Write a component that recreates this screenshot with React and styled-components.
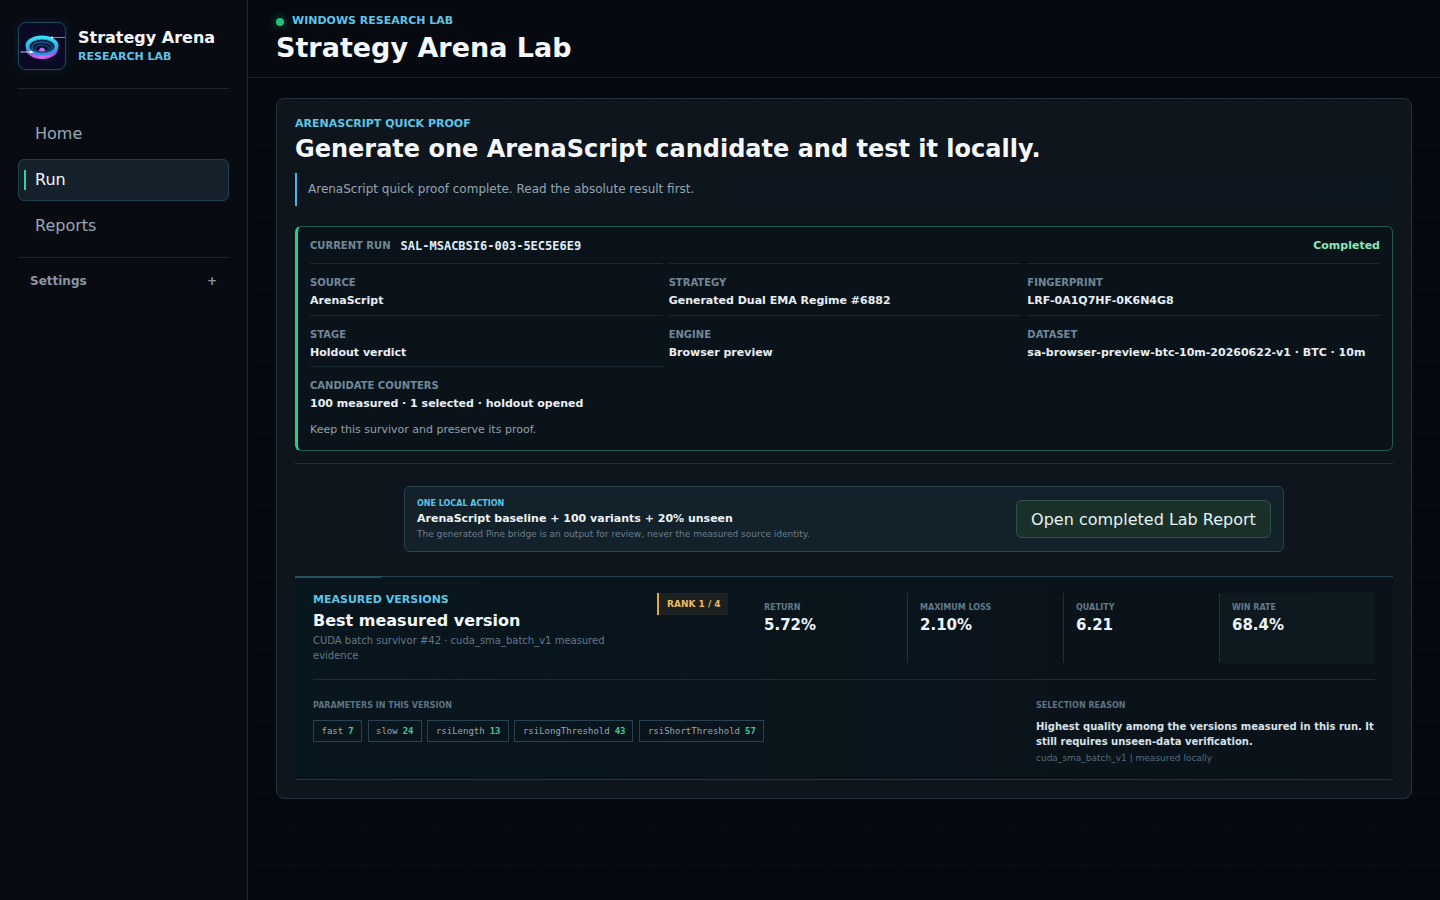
import React from 'react';
import styled, { createGlobalStyle } from 'styled-components';

const GlobalStyle = createGlobalStyle`
  html, body { margin: 0; padding: 0; height: 100%; }
  body {
    background-color: #05080e;
    background-image:
      linear-gradient(rgba(120, 160, 180, 0.025) 1px, transparent 1px),
      linear-gradient(90deg, rgba(120, 160, 180, 0.025) 1px, transparent 1px);
    background-size: 36px 36px;
    font-family: "DejaVu Sans", sans-serif;
    color: #f3f7fa;
    overflow: hidden;
  }
  * { box-sizing: border-box; }
`;

const Shell = styled.div`
  display: grid;
  grid-template-columns: 248px 1fr;
  height: 900px;
`;

const Sidebar = styled.aside`
  background: #080b12;
  border-right: 1px solid #222c36;
  padding: 22px 18px 0;
`;

const Brand = styled.div`
  display: flex;
  align-items: center;
  gap: 12px;
  height: 67px;
  padding-bottom: 19px;
  border-bottom: 1px solid #17252f;
`;

const LogoBox = styled.div`
  width: 48px;
  height: 48px;
  border: 1px solid #1d4a5c;
  border-radius: 8px;
  background: #0a0a24;
  overflow: hidden;
  box-shadow: 0 0 12px rgba(60, 180, 220, 0.12);
`;

const BrandName = styled.div`
  margin-top: 2px;
  font-size: 16px;
  font-weight: 700;
  line-height: 20px;
  color: #f5f8fb;
`;

const BrandSub = styled.div`
  margin-top: 1px;
  font-size: 11px;
  font-weight: 700;
  line-height: 16px;
  color: #5cc5e6;
`;

const Nav = styled.nav`
  display: flex;
  flex-direction: column;
  gap: 4px;
  padding: 24px 0 10px;
  border-bottom: 1px solid #1b232c;
`;

const NavItem = styled.a`
  position: relative;
  display: flex;
  align-items: center;
  height: 42px;
  padding: 0 0 2px 16px;
  font-size: 16px;
  border-radius: 6px;
  border: 1px solid ${(p) => (p.$active ? '#21404f' : 'transparent')};
  background: ${(p) => (p.$active ? '#15212a' : 'transparent')};
  color: ${(p) => (p.$active ? '#f3f7fa' : '#99a6b3')};

  &::before {
    content: ${(p) => (p.$active ? '""' : 'none')};
    position: absolute;
    left: 5px;
    top: 10px;
    bottom: 10px;
    width: 2px;
    background: #2dd4a8;
  }
`;

const SettingsRow = styled.div`
  display: flex;
  justify-content: space-between;
  align-items: center;
  padding: 16px 12px 0;
  font-size: 12px;
  font-weight: 700;
  color: #8a96a2;
`;

const Main = styled.main`
  min-width: 0;
`;

const Header = styled.header`
  height: 78px;
  padding: 13px 28px 0;
  background: #060a10;
  border-bottom: 1px solid #18222b;
`;

const Eyebrow = styled.div`
  display: flex;
  align-items: center;
  gap: 8px;
  font-size: 11px;
  font-weight: 700;
  line-height: 16px;
  color: #5cc5e6;
`;

const StatusDot = styled.span`
  width: 8px;
  height: 8px;
  margin-top: 1px;
  border-radius: 50%;
  background: #22c07a;
  box-shadow: 0 0 8px rgba(34, 192, 122, 0.55);
`;

const PageTitle = styled.h1`
  margin: 2px 0 0;
  font-size: 27px;
  font-weight: 700;
  line-height: 34px;
  color: #f5f8fb;
`;

const Content = styled.div`
  padding: 20px 28px;
`;

const Card = styled.section`
  height: 701px;
  padding: 18px;
  border: 1px solid #24323d;
  border-radius: 8px;
  background: #0e151d;
`;

const SectionLabel = styled.div`
  font-size: 11px;
  font-weight: 700;
  line-height: 14px;
  color: #5cc5e6;
`;

const CardTitle = styled.h2`
  margin: 2px 0 0;
  font-size: 24px;
  font-weight: 700;
  line-height: 32px;
  color: #f5f8fb;
`;

const Notice = styled.p`
  margin: 8px 0 0;
  height: 33px;
  padding: 0 0 2px 11px;
  display: flex;
  align-items: center;
  border-left: 2px solid #48b8e8;
  font-size: 12px;
  color: #94a5b2;
  background: linear-gradient(90deg, #0e151d, #0d171f);
`;

const RunPanel = styled.div`
  margin-top: 20px;
  height: 225px;
  padding: 0 12px 0 12px;
  border: 1px solid #235a48;
  border-left: 3px solid #25cf8a;
  border-radius: 6px;
  background: #0a131a;
`;

const RunHead = styled.div`
  display: flex;
  align-items: center;
  height: 36px;
`;

const RunLabel = styled.span`
  font-size: 10px;
  font-weight: 700;
  color: #71889a;
`;

const RunId = styled.span`
  margin-left: 10px;
  padding-top: 2px;
  font-family: "DejaVu Sans Mono", monospace;
  font-size: 12px;
  font-weight: 700;
  color: #dfeffa;
`;

const RunStatus = styled.span`
  margin-left: auto;
  font-size: 11px;
  font-weight: 700;
  color: #8ae6ba;
`;

const MetaGrid = styled.div`
  display: grid;
  grid-template-columns: repeat(3, 1fr);
  grid-template-rows: 52px 51px 52px;
  column-gap: 6px;
`;

const MetaCell = styled.div`
  padding-top: 10.5px;
  border-top: 1px solid #182730;
`;

const MetaCounters = styled(MetaCell)`
  grid-column: 1;
`;

const MetaLabel = styled.div`
  font-size: 10px;
  font-weight: 700;
  line-height: 16px;
  color: #71889a;
`;

const MetaValue = styled.div`
  margin-top: 2px;
  font-size: 11px;
  font-weight: 700;
  line-height: 16px;
  color: #e8eef3;
`;

const RunNote = styled.div`
  margin-top: 4px;
  font-size: 11px;
  line-height: 16px;
  color: #93a0ab;
`;

const ActionWrap = styled.div`
  margin-top: 12px;
  padding: 22px 0 24px;
  border-top: 1px solid #24303a;
  display: flex;
  justify-content: center;
`;

const ActionBox = styled.div`
  width: 880px;
  height: 66px;
  padding: 0 12px;
  display: flex;
  align-items: center;
  justify-content: space-between;
  border: 1px solid #2a4552;
  border-radius: 6px;
  background: #12212a;
`;

const ActionLabel = styled.div`
  font-size: 8px;
  font-weight: 700;
  line-height: 12px;
  color: #5cc5e6;
`;

const ActionTitle = styled.div`
  font-size: 11px;
  font-weight: 700;
  line-height: 18px;
  color: #eef3f7;
`;

const ActionHint = styled.div`
  font-size: 9px;
  line-height: 13px;
  color: #6b7f8e;
`;

const ReportButton = styled.button`
  height: 38px;
  width: 255px;
  font-family: inherit;
  font-size: 16px;
  color: #e4f3f5;
  border: 1px solid #2e5346;
  border-radius: 6px;
  background: #1a3028;
`;

const VersionPanel = styled.div`
  position: relative;
  height: 204px;
  padding: 16px 18px 0;
  border-top: 1px solid #24414f;
  border-bottom: 1px solid #24343f;
  background: linear-gradient(90deg, #08161e, #0b1219);

  &::before {
    content: '';
    position: absolute;
    left: 0;
    top: -1px;
    width: 86px;
    height: 2px;
    background: #25505f;
  }
`;

const VersionTop = styled.div`
  display: flex;
  height: 87px;
  border-bottom: 1px solid #1c2c36;
`;

const VersionIntro = styled.div`
  width: 415px;
  position: relative;
`;

const VersionTitle = styled.h3`
  margin: 4px 0 0;
  font-size: 16px;
  font-weight: 700;
  line-height: 20px;
  color: #f5f8fb;
`;

const VersionDesc = styled.p`
  margin: 2px 0 0;
  width: 310px;
  font-size: 10px;
  line-height: 15px;
  color: #64798a;
`;

const RankBadge = styled.span`
  position: absolute;
  top: 0;
  right: 0;
  width: 71px;
  height: 22px;
  padding-left: 8px;
  display: flex;
  align-items: center;
  white-space: nowrap;
  font-size: 9px;
  font-weight: 700;
  color: #e9bb62;
  background: #1c2020;
  border-left: 2px solid #e8a93c;
`;

const Stats = styled.div`
  flex: 1;
  margin-left: 23px;
  display: grid;
  grid-template-columns: repeat(4, 1fr);
  height: 70px;
`;

const Stat = styled.div`
  padding: 9px 0 0 12px;
  background: ${(p) => (p.$last ? '#0e181f' : 'transparent')};
  border-left: 1px solid ${(p) => (p.$first ? 'transparent' : '#23323c')};
`;

const StatLabel = styled.div`
  font-size: 8px;
  font-weight: 700;
  line-height: 12px;
  color: #617a8a;
`;

const StatValue = styled.div`
  margin-top: 1px;
  font-size: 15px;
  font-weight: 700;
  line-height: 20px;
  color: #eef5fa;
`;

const VersionBottom = styled.div`
  display: flex;
  justify-content: space-between;
  padding-top: 20px;
`;

const SmallHead = styled.div`
  font-size: 8px;
  font-weight: 700;
  line-height: 12px;
  color: #5c7383;
`;

const Params = styled.div`
  display: flex;
  gap: 5.9px;
  margin-top: 8px;
`;

const Param = styled.span`
  height: 22px;
  padding: 0 7px 0 7.5px;
  display: flex;
  align-items: center;
  gap: 5px;
  font-family: "DejaVu Sans Mono", monospace;
  font-size: 9px;
  color: #97a6b1;
  border: 1px solid #2a4250;

  b {
    font-weight: 700;
    color: #3fc99a;
  }
`;

const Reason = styled.div`
  width: 339px;
`;

const ReasonText = styled.div`
  margin-top: 7px;
  font-size: 10px;
  font-weight: 700;
  line-height: 15px;
  color: #d9e2e9;
`;

const ReasonMeta = styled.div`
  margin-top: 2px;
  font-size: 9px;
  line-height: 14px;
  color: #566c7b;
`;

const Logo = () => (
  <svg width="46" height="46" viewBox="0 0 46 46">
    <defs>
      <linearGradient id="lip" x1="0" y1="0" x2="1" y2="0">
        <stop offset="0" stopColor="#a04df0" />
        <stop offset="0.5" stopColor="#e566f0" />
        <stop offset="1" stopColor="#8f52e8" />
      </linearGradient>
      <linearGradient id="rim" x1="0" y1="0" x2="0" y2="1">
        <stop offset="0" stopColor="#3de6f5" />
        <stop offset="1" stopColor="#2a86e0" />
      </linearGradient>
      <radialGradient id="glow">
        <stop offset="0" stopColor="#3a2a9c" stopOpacity="0.7" />
        <stop offset="1" stopColor="#0a0a24" stopOpacity="0" />
      </radialGradient>
    </defs>
    <ellipse cx="23" cy="24" rx="22" ry="20" fill="url(#glow)" />
    <ellipse cx="23" cy="26" rx="16" ry="10" fill="url(#lip)" />
    <ellipse cx="23" cy="22.5" rx="16.5" ry="10" fill="url(#rim)" />
    <ellipse cx="23" cy="23.5" rx="13" ry="7.4" fill="#0a2448" stroke="#27c5ea" strokeWidth="0.8" />
    <ellipse cx="23" cy="24.5" rx="10" ry="5.4" fill="#0a1a3c" stroke="#2a9ad8" strokeWidth="0.7" />
    <ellipse cx="23" cy="25.5" rx="7" ry="3.4" fill="#0c1236" stroke="#2474b8" strokeWidth="0.6" />
    <path d="M19.5 27.5 Q23 21.5 26.5 27.5 Q23 29.5 19.5 27.5 Z" fill="#c06cf0" />
    <path d="M1.5 29 H15" stroke="#eafaff" strokeWidth="0.9" opacity="0.9" />
    <circle cx="12" cy="29" r="1.3" fill="#f4fdff" />
    <path d="M30 14.5 H46" stroke="#bff0ff" strokeWidth="0.7" opacity="0.8" />
    <circle cx="33" cy="14.5" r="1.1" fill="#e8fbff" />
  </svg>
);

const META = [
  ['SOURCE', 'ArenaScript'],
  ['STRATEGY', 'Generated Dual EMA Regime #6882'],
  ['FINGERPRINT', 'LRF-0A1Q7HF-0K6N4G8'],
  ['STAGE', 'Holdout verdict'],
  ['ENGINE', 'Browser preview'],
  ['DATASET', 'sa-browser-preview-btc-10m-20260622-v1 · BTC · 10m'],
];

const STATS = [
  ['RETURN', '5.72%'],
  ['MAXIMUM LOSS', '2.10%'],
  ['QUALITY', '6.21'],
  ['WIN RATE', '68.4%'],
];

const PARAMS = [
  ['fast', 7],
  ['slow', 24],
  ['rsiLength', 13],
  ['rsiLongThreshold', 43],
  ['rsiShortThreshold', 57],
];

export default function App() {
  return (
    <Shell>
      <GlobalStyle />
      <Sidebar>
        <Brand>
          <LogoBox><Logo /></LogoBox>
          <div>
            <BrandName>Strategy Arena</BrandName>
            <BrandSub>RESEARCH LAB</BrandSub>
          </div>
        </Brand>
        <Nav>
          <NavItem>Home</NavItem>
          <NavItem $active>Run</NavItem>
          <NavItem>Reports</NavItem>
        </Nav>
        <SettingsRow>
          <span>Settings</span>
          <span>+</span>
        </SettingsRow>
      </Sidebar>
      <Main>
        <Header>
          <Eyebrow><StatusDot />WINDOWS RESEARCH LAB</Eyebrow>
          <PageTitle>Strategy Arena Lab</PageTitle>
        </Header>
        <Content>
          <Card>
            <SectionLabel>ARENASCRIPT QUICK PROOF</SectionLabel>
            <CardTitle>Generate one ArenaScript candidate and test it locally.</CardTitle>
            <Notice>ArenaScript quick proof complete. Read the absolute result first.</Notice>
            <RunPanel>
              <RunHead>
                <RunLabel>CURRENT RUN</RunLabel>
                <RunId>SAL-MSACBSI6-003-5EC5E6E9</RunId>
                <RunStatus>Completed</RunStatus>
              </RunHead>
              <MetaGrid>
                {META.map(([label, value]) => (
                  <MetaCell key={label}>
                    <MetaLabel>{label}</MetaLabel>
                    <MetaValue>{value}</MetaValue>
                  </MetaCell>
                ))}
                <MetaCounters>
                  <MetaLabel>CANDIDATE COUNTERS</MetaLabel>
                  <MetaValue>100 measured · 1 selected · holdout opened</MetaValue>
                </MetaCounters>
              </MetaGrid>
              <RunNote>Keep this survivor and preserve its proof.</RunNote>
            </RunPanel>
            <ActionWrap>
              <ActionBox>
                <div>
                  <ActionLabel>ONE LOCAL ACTION</ActionLabel>
                  <ActionTitle>ArenaScript baseline + 100 variants + 20% unseen</ActionTitle>
                  <ActionHint>The generated Pine bridge is an output for review, never the measured source identity.</ActionHint>
                </div>
                <ReportButton>Open completed Lab Report</ReportButton>
              </ActionBox>
            </ActionWrap>
            <VersionPanel>
              <VersionTop>
                <VersionIntro>
                  <SectionLabel>MEASURED VERSIONS</SectionLabel>
                  <VersionTitle>Best measured version</VersionTitle>
                  <VersionDesc>CUDA batch survivor #42 · cuda_sma_batch_v1 measured evidence</VersionDesc>
                  <RankBadge>RANK 1 / 4</RankBadge>
                </VersionIntro>
                <Stats>
                  {STATS.map(([label, value], i) => (
                    <Stat key={label} $first={i === 0} $last={i === 3}>
                      <StatLabel>{label}</StatLabel>
                      <StatValue>{value}</StatValue>
                    </Stat>
                  ))}
                </Stats>
              </VersionTop>
              <VersionBottom>
                <div>
                  <SmallHead>PARAMETERS IN THIS VERSION</SmallHead>
                  <Params>
                    {PARAMS.map(([name, value]) => (
                      <Param key={name}>{name} <b>{value}</b></Param>
                    ))}
                  </Params>
                </div>
                <Reason>
                  <SmallHead>SELECTION REASON</SmallHead>
                  <ReasonText>Highest quality among the versions measured in this run. It still requires unseen-data verification.</ReasonText>
                  <ReasonMeta>cuda_sma_batch_v1 | measured locally</ReasonMeta>
                </Reason>
              </VersionBottom>
            </VersionPanel>
          </Card>
        </Content>
      </Main>
    </Shell>
  );
}
